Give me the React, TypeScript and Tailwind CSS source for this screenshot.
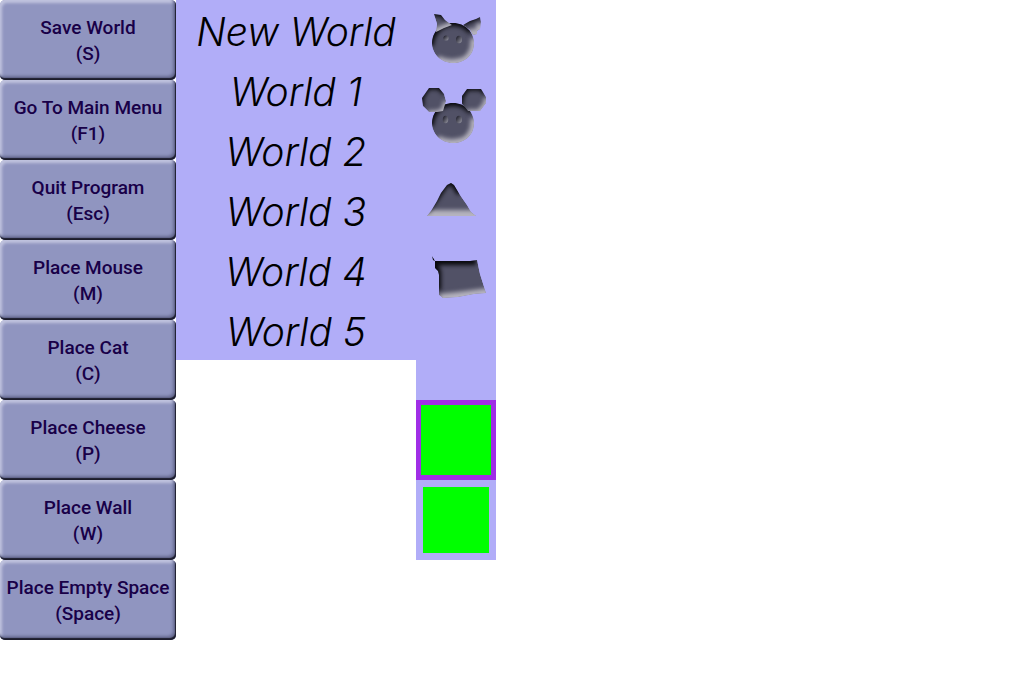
import type { ReactNode } from "react";

const commands = [
  ["Save World", "(S)"],
  ["Go To Main Menu", "(F1)"],
  ["Quit Program", "(Esc)"],
  ["Place Mouse", "(M)"],
  ["Place Cat", "(C)"],
  ["Place Cheese", "(P)"],
  ["Place Wall", "(W)"],
  ["Place Empty Space", "(Space)"],
];

const worlds = ["New World", "World 1", "World 2", "World 3", "World 4", "World 5"];

type Shape = { id: string; d: string; dark: string; light: string; edge?: number };

/* A solid shape with a soft shadow along its upper left edge and a soft
   highlight along its lower right edge. */
function Relief({ id, d, dark, light, edge = 12 }: Shape) {
  return (
    <g>
      <clipPath id={id}>
        <path d={d} />
      </clipPath>
      <g clipPath={`url(#${id})`}>
        <path d={d} fill="#515166" />
        <path d={light} fill="none" stroke="#b5b3be" strokeWidth={edge} filter="url(#soft)" />
        <path d={dark} fill="none" stroke="#08080c" strokeWidth={edge - 4} filter="url(#soft)" />
      </g>
    </g>
  );
}

function Drawing({ children }: { children: ReactNode }) {
  return (
    <svg viewBox="0 0 80 80" className="size-20" aria-hidden="true">
      <defs>
        <filter
          id="soft"
          filterUnits="userSpaceOnUse"
          x="-10"
          y="-10"
          width="100"
          height="100"
          colorInterpolationFilters="sRGB"
        >
          <feGaussianBlur stdDeviation="2" />
        </filter>
        <linearGradient id="eye" x1="0" y1="0" x2="1" y2="1">
          <stop offset="0.2" stopColor="#2c2c38" />
          <stop offset="1" stopColor="#9b9ba8" />
        </linearGradient>
      </defs>
      {children}
    </svg>
  );
}

const head = {
  d: "M37 23C49 23 58 32 58 43C58 55 49 63 37 63C25 63 16 54 16 43C16 32 25 23 37 23Z",
  dark: "M14 46C13 35 23 22 37 22C46 22 52 26 56 31",
  light: "M20 61C32 68 51 66 57 55C60 50 61 44 60 38",
};

function Cat() {
  return (
    <Drawing>
      <Relief id="cat-head" {...head} />
      <Relief
        id="cat-left"
        d="M18 14L25 15L29 20L36 25L28 28L20 32L21 24Z"
        dark="M17 13L27 14L31 19"
        light="M18 34L38 26"
        edge={10}
      />
      <Relief
        id="cat-right"
        d="M47 25L54 21L60 19L64 17L65 22L64 29L61 31L61 34L57 35L54 30Z"
        dark="M46 23L55 19L64 15"
        light="M66 24L64 31L57 37L52 31"
        edge={10}
      />
      <ellipse cx="30" cy="38" rx="2.6" ry="2.6" fill="url(#eye)" />
      <ellipse cx="43" cy="39.5" rx="3" ry="3.8" fill="url(#eye)" />
    </Drawing>
  );
}

function Mouse() {
  return (
    <Drawing>
      <Relief id="mouse-head" {...head} />
      <Relief
        id="mouse-left"
        d="M13 8H23L28 14L30 21L27 31L21 32H13L7 26L6 18Z"
        dark="M6 26L5 18L12 7H23L29 13"
        light="M12 35H21L29 32L32 22"
        edge={9}
      />
      <Relief
        id="mouse-right"
        d="M51 9H65L70 17V23L64 31H52L46 24V16Z"
        dark="M45 25L45 17L51 8H65L70 13"
        light="M51 34H64L72 24V18"
        edge={9}
      />
      <ellipse cx="29.5" cy="39.5" rx="2.7" ry="3.8" fill="url(#eye)" />
      <ellipse cx="43" cy="39.5" rx="3" ry="3.8" fill="url(#eye)" />
    </Drawing>
  );
}

function Cheese() {
  return (
    <Drawing>
      <Relief
        id="cheese"
        d="M35 23L38 25L44 35L51 45L55 52L60 56H11L15 51L21 41L25 33L31 25Z"
        dark="M9 51L19 38L29 23L35 21L39 24L45 33"
        light="M5 56H66"
      />
    </Drawing>
  );
}

function Wall() {
  return (
    <Drawing>
      <Relief
        id="wall"
        d="M16 16L19 21H54L61 20L64 34L70 53L58 54L42 57L27 58L23 55V35L22 31L19 28V21L17 20Z"
        dark="M16 15L18 21H60M17 22L21 32V50"
        light="M24 60L42 58L73 54"
      />
    </Drawing>
  );
}

const pieces = [
  { name: "Cat", icon: <Cat /> },
  { name: "Mouse", icon: <Mouse /> },
  { name: "Cheese", icon: <Cheese /> },
  { name: "Wall", icon: <Wall /> },
];

export default function App() {
  return (
    <main className="flex min-h-screen items-start bg-white">
      <nav className="flex w-44 shrink-0 flex-col">
        {commands.map(([label, key]) => (
          <button
            key={label}
            className="flex h-20 flex-col items-center justify-center rounded-[5px] bg-[#9095c0] pt-0.5 font-['Roboto',sans-serif] text-[19px] leading-[26px] font-medium whitespace-nowrap text-[#180048] shadow-[inset_-1px_-2px_1px_#1c1c2c,inset_-3px_-4px_3px_#686c92,inset_2px_3px_3px_#c0c3de]"
          >
            <span>{label}</span>
            <span>{key}</span>
          </button>
        ))}
      </nav>
      <section className="flex w-60 shrink-0 flex-col bg-[#b1adf8]">
        {worlds.map((world) => (
          <button
            key={world}
            className="h-15 pt-1 font-['Inter',sans-serif] text-[39px] leading-[56px] font-light text-black italic"
          >
            {world}
          </button>
        ))}
      </section>
      <aside className="flex w-20 shrink-0 flex-col bg-[#b1adf8]">
        {pieces.map((piece) => (
          <button key={piece.name} aria-label={piece.name} className="h-20">
            {piece.icon}
          </button>
        ))}
        <button aria-label="Empty space" className="h-20" />
        <button aria-label="Selected colour" className="h-20 border-5 border-[#a02ee6] bg-[#00ff00]" />
        <button aria-label="Colour" className="h-20 border-7 border-[#b1adf8] bg-[#00ff00]" />
      </aside>
    </main>
  );
}
